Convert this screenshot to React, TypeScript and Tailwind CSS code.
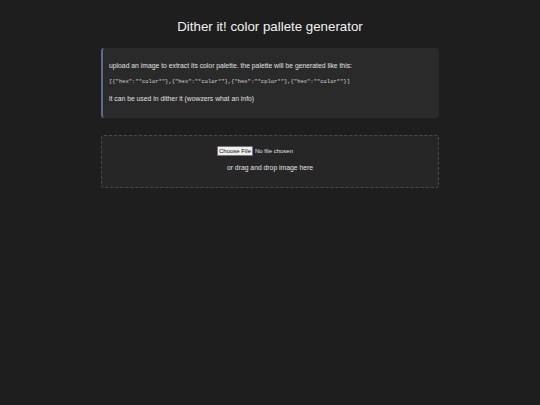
import React from "react";

export default function App() {
  const code = '[{"hex":"*color*"},{"hex":"*color*"},{"hex":"*cplor*"},{"hex":"*color*"}]';
  return (
    <div className="min-h-screen w-full bg-[#1e1e1e] text-[#e0e0e0] [font-family:'Liberation_Sans',Arial,sans-serif]">
      <div className="mx-auto w-[338px] pt-[19px]">
        <h1 className="text-center text-[13.3px] leading-[16px] text-[#f2f2f2]">Dither it! color pallete generator</h1>
        <div className="mt-[13px] h-[70px] rounded-[3px] border-l-2 border-[#5b6b8c] bg-[#2a2a2a] pl-[6px] pt-[14px]">
          <p className="text-[6.8px] leading-[8px]">upload an image to extract its color palette. the palette will be generated like this:</p>
          <p className="mt-[8px] text-[5.5px] leading-[8px] [font-family:'Liberation_Mono',monospace] text-[#d8d8d8]">{code}</p>
          <p className="mt-[9px] text-[6.8px] leading-[8px]">it can be used in dither it (wowzers what an info)</p>
        </div>
        <div className="mt-[17px] flex h-[53px] flex-col items-center rounded-[3px] border border-dashed border-[#4a4a4a] bg-[#262626] pt-[10px]">
          <div className="flex w-[106px] items-center gap-[2px] text-[6px] leading-[7px]">
            <span className="w-[36px] rounded-[1px] border border-[#767676] bg-[#efefef] py-[0.5px] text-center text-[#111]">Choose File</span>
            <span className="text-[#e0e0e0]">No file chosen</span>
          </div>
          <p className="mt-[8px] text-[6.8px] leading-[8px]">or drag and drop image here</p>
        </div>
      </div>
    </div>
  );
}
